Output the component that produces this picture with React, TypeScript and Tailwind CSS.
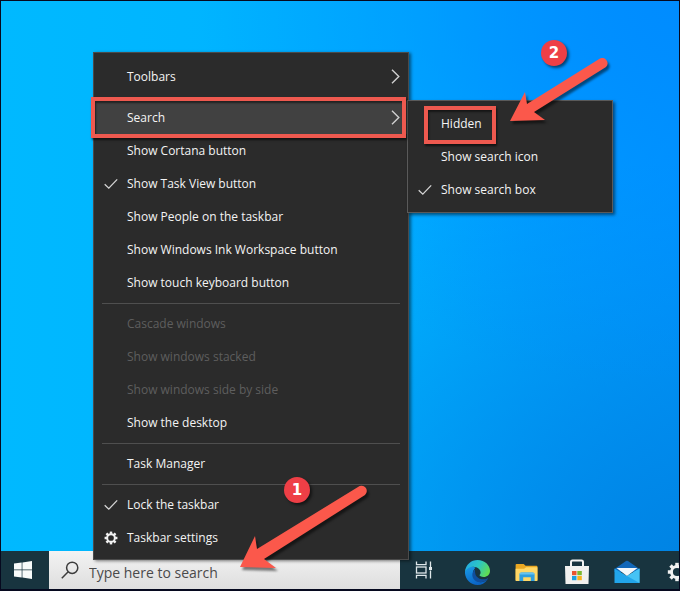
import React from 'react';

type MenuEntry = {
  label: string;
  icon?: 'check' | 'gear';
  arrow?: boolean;
  disabled?: boolean;
};

const menuGroups: MenuEntry[][] = [
  [{ label: 'Toolbars', arrow: true }],
  [
    { label: 'Search', arrow: true },
    { label: 'Show Cortana button' },
    { label: 'Show Task View button', icon: 'check' },
    { label: 'Show People on the taskbar' },
    { label: 'Show Windows Ink Workspace button' },
    { label: 'Show touch keyboard button' },
  ],
  [
    { label: 'Cascade windows', disabled: true },
    { label: 'Show windows stacked', disabled: true },
    { label: 'Show windows side by side', disabled: true },
    { label: 'Show the desktop' },
  ],
  [{ label: 'Task Manager' }],
  [
    { label: 'Lock the taskbar', icon: 'check' },
    { label: 'Taskbar settings', icon: 'gear' },
  ],
];

const searchOptions: MenuEntry[] = [
  { label: 'Hidden' },
  { label: 'Show search icon' },
  { label: 'Show search box', icon: 'check' },
];

const CheckIcon = () => (
  <svg viewBox="0 0 14 12" className="h-3 w-3.5" fill="none" stroke="#d4d4d4" strokeWidth="1.3">
    <path d="M0.7 6.2 L4.8 10.2 L13.2 1.4" />
  </svg>
);

const GearIcon = ({ className }: { className: string }) => (
  <svg viewBox="0 0 24 24" className={className} fill="none" stroke="#f2f2f2">
    <circle cx="12" cy="12" r="6.6" strokeWidth="3.4" />
    {[0, 45, 90, 135, 180, 225, 270, 315].map(angle => (
      <path key={angle} d="M12 5 V1" strokeWidth="4.2" transform={`rotate(${angle} 12 12)`} />
    ))}
  </svg>
);

const ChevronIcon = () => (
  <svg viewBox="0 0 9 15" className="h-[15px] w-[9px]" fill="none" stroke="#d0d0d0" strokeWidth="1.4">
    <path d="M1 0.8 L7.8 7.5 L1 14.2" />
  </svg>
);

const MenuRow = ({ entry, active }: { entry: MenuEntry; active?: boolean }) => (
  <button
    type="button"
    role="menuitem"
    disabled={entry.disabled}
    className={`flex h-[33px] w-full items-center pr-2 text-left text-[12px] text-[#f4f4f4] disabled:text-[#5e5e5e] ${active ? 'bg-[#414141]' : ''}`}
  >
    <span className="flex w-[33px] shrink-0 justify-center">
      {entry.icon === 'check' && <CheckIcon />}
      {entry.icon === 'gear' && <GearIcon className="h-3.5 w-3.5" />}
    </span>
    <span className="flex-1 whitespace-nowrap">{entry.label}</span>
    {entry.arrow && <ChevronIcon />}
  </button>
);

const Badge = ({ children, className }: { children: React.ReactNode; className: string }) => (
  <span
    className={`absolute flex h-[26px] w-[26px] items-center justify-center rounded-full bg-[#ee3f46] font-['DejaVu_Sans'] text-[15px] font-bold text-white shadow-[2px_2px_3px_rgba(0,0,0,0.55)] ${className}`}
  >
    {children}
  </span>
);

const Highlight = ({ className }: { className: string }) => (
  <span className={`pointer-events-none absolute border-4 border-[#ee594f] shadow-[1px_2px_2px_rgba(0,0,0,0.6),inset_1px_2px_2px_rgba(0,0,0,0.5)] ${className}`} />
);

const SearchSubmenu = () => (
  <div role="menu" className="absolute -top-px left-[313px] w-[206px] border border-[#5a5a5a] bg-[#2b2b2b] py-1.5 shadow-[2px_2px_3px_rgba(0,0,0,0.5)]">
    {searchOptions.map(option => (
      <MenuRow key={option.label} entry={option} />
    ))}
    <Highlight className="left-4 top-[5px] h-[38px] w-[72px]" />
    <Badge className="-top-[61px] left-[133px]">2</Badge>
    <svg viewBox="0 0 106 76" className="pointer-events-none absolute -top-[47px] left-[99px] h-[76px] w-[106px] drop-shadow-[2px_3px_1px_rgba(0,0,0,0.5)]">
      <path fill="#fb584b" d="M3 67 L18 38 L20 50 L93 4.5 A5.3 5.3 0 0 1 99 13 L27 58 L38 66 Z" />
    </svg>
  </div>
);

const TaskbarMenu = () => (
  <div role="menu" className="absolute -bottom-[9px] left-[92px] w-[316px] border border-[#4b4b4b] bg-[#2b2b2b] pt-[7px] pb-[5px] shadow-[2px_1px_3px_rgba(0,0,0,0.5)]">
    {menuGroups.map((group, index) => (
      <div key={group[0].label}>
        {index > 0 && <hr className="mx-2 mt-1 mb-[3px] border-t border-[#4f4f4f]" />}
        {group.map(entry =>
          entry.label === 'Search' ? (
            <div key={entry.label} className="relative z-10">
              <MenuRow entry={entry} active />
              <SearchSubmenu />
              <Highlight className="-left-[3px] right-[2px] -top-1 -bottom-1" />
            </div>
          ) : (
            <MenuRow key={entry.label} entry={entry} />
          ),
        )}
      </div>
    ))}
    <Badge className="bottom-[56px] left-[190px]">1</Badge>
    <svg viewBox="0 0 136 90" className="pointer-events-none absolute -bottom-[15px] left-[143px] h-[90px] w-[136px] drop-shadow-[2px_3px_1px_rgba(0,0,0,0.5)]">
      <path fill="#fb584b" d="M3 83 L18 52 L20 65 L121 3 A5.3 5.3 0 0 1 128 11 L27 75 L39 84 Z" />
    </svg>
  </div>
);

const WindowsLogo = () => (
  <svg viewBox="0 0 18 18" className="h-[18px] w-[18px]" fill="#f7fafa">
    <path d="M0 2.6 L7.7 1.5 V8.6 H0 Z M8.4 1.4 L18 0 V8.6 H8.4 Z M0 9.3 H7.7 V16.5 L0 15.4 Z M8.4 9.3 H18 V18 L8.4 16.6 Z" />
  </svg>
);

const TaskViewIcon = () => (
  <svg viewBox="0 0 18 18" className="h-[18px] w-[18px]" fill="none" stroke="#dfe7ea" strokeWidth="1.3">
    <path d="M1.5 0.5 V3.6 H11 V0.5 M1.5 17.5 V14.4 H11 V17.5" />
    <rect x="1.5" y="6" width="9.5" height="6" />
    <path d="M15.5 0.5 V6 M15.5 9.5 V17.5" />
    <rect x="14" y="6" width="3" height="3" fill="#dfe7ea" stroke="none" />
  </svg>
);

const EdgeIcon = () => (
  <svg viewBox="0 0 24 24" className="h-[25px] w-[25px]">
    <defs>
      <linearGradient id="edgeTop" x1="0" y1="0.2" x2="1" y2="0.6">
        <stop offset="0" stopColor="#22a9e8" />
        <stop offset="0.5" stopColor="#2cc6c3" />
        <stop offset="1" stopColor="#62dd4f" />
      </linearGradient>
      <linearGradient id="edgeLeft" x1="0" y1="0" x2="0.5" y2="1">
        <stop offset="0" stopColor="#1a9ce8" />
        <stop offset="1" stopColor="#0a63c4" />
      </linearGradient>
    </defs>
    <path fill="url(#edgeLeft)" d="M0 11 C1 6 6 5 10 7.5 C7 10 6.7 15.5 10 19 C13 22 17 22 21.5 19 C19 22.5 16 24 12 24 C5 24 -0.5 18 0 11 Z" />
    <path fill="#0f4f9e" d="M9.6 9 C7 11 6 15 8.5 18.5 C11 22 17 22.7 22 18.3 C22.3 17.8 22 17.4 21.5 17.7 C17 19.7 11.5 18 10 13.6 C9.5 12 9.5 10.4 9.6 9 Z" />
    <path fill="url(#edgeTop)" d="M0 11 C0.8 4.5 6 0 12 0 C19 0 24 5 24 10.3 C24 14.2 21 16.3 18 16.3 C15.5 16.3 13.7 15.4 14 14.5 C15.5 13 15.3 10.5 13.5 8.7 C10 5.2 3 5.6 0 11 Z" />
  </svg>
);

const ExplorerIcon = () => (
  <svg viewBox="0 0 24 20" className="h-[19px] w-6">
    <path fill="#e9a823" d="M1 1 H8.5 L10.5 3 H22 Q23 3 23 4 V18 H0 V2 Q0 1 1 1 Z" />
    <path fill="#ffd765" d="M0 6 H9 L11 4.5 H23 V19 H0 Z" />
    <path fill="#2f9ede" d="M4 19 V12 Q4 10 6 10 H18 Q20 10 20 12 V19 H16 V15 H8 V19 Z" />
    <path fill="#67c3ef" d="M4 12 Q4 10 6 10 H18 Q20 10 20 12 Z" />
  </svg>
);

const StoreIcon = () => (
  <svg viewBox="0 0 26 26" className="h-[26px] w-[26px]">
    <path fill="none" stroke="#f3f3f3" strokeWidth="2" d="M7 8 V3 Q7 1.5 8.5 1.5 H17.5 Q19 1.5 19 3 V8" />
    <path fill="#f1f1ef" d="M1 7 H25 L24.5 25 H1.5 Z" />
    <path fill="#e9532f" d="M8 12 H12.5 V16.2 H8 Z" />
    <path fill="#7cb82f" d="M13.3 12 H17.8 V16.2 H13.3 Z" />
    <path fill="#1c9fe0" d="M8 17 H12.5 V21.2 H8 Z" />
    <path fill="#f8b31c" d="M13.3 17 H17.8 V21.2 H13.3 Z" />
  </svg>
);

const MailIcon = () => (
  <svg viewBox="0 0 26 24" className="h-6 w-[26px]">
    <path fill="#1267b8" d="M0.5 9 L12 1 Q13 0.4 14 1 L25.5 9 V12 H0.5 Z" />
    <path fill="#22a5ea" d="M0.5 8.5 L13 16 L25.5 8.5 V23 H0.5 Z" />
    <path fill="#f4f8fb" d="M2.5 8 H23.5 L13 16 Z" />
    <path fill="#46c3f5" d="M25.5 8.5 V23 L13 16 Z" />
  </svg>
);

const apps = [
  { name: 'Microsoft Edge', icon: <EdgeIcon /> },
  { name: 'File Explorer', icon: <ExplorerIcon /> },
  { name: 'Microsoft Store', icon: <StoreIcon /> },
  { name: 'Mail', icon: <MailIcon /> },
  { name: 'Settings', icon: <GearIcon className="h-5 w-5" /> },
];

const Taskbar = () => (
  <div className="flex h-[38px] overflow-hidden bg-[#18343f]">
    <button type="button" aria-label="Start" className="flex w-12 shrink-0 items-center justify-center pr-1">
      <WindowsLogo />
    </button>
    <label className="flex w-[351px] shrink-0 items-center gap-2.5 bg-linear-to-b from-[#f3f3f3] to-[#dedede] pl-3">
      <svg viewBox="0 0 18 18" className="h-[18px] w-[18px] shrink-0" fill="none" stroke="#3c3c3c" strokeWidth="1.5">
        <circle cx="11.2" cy="6.8" r="5.6" />
        <path d="M7.2 10.8 L0.8 17.3" />
      </svg>
      <input
        type="text"
        aria-label="Search"
        placeholder="Type here to search"
        className="w-full bg-transparent pt-1 text-[14px] text-[#4a4a4a] outline-none placeholder:text-[#4a4a4a]"
      />
    </label>
    <button type="button" aria-label="Task View" className="flex w-[52px] shrink-0 items-center justify-center pr-1">
      <TaskViewIcon />
    </button>
    {apps.map(app => (
      <button key={app.name} type="button" aria-label={app.name} className="flex w-[50px] shrink-0 items-center justify-center pt-1">
        {app.icon}
      </button>
    ))}
  </div>
);

export default function App() {
  return (
    <div className="flex h-screen flex-col overflow-hidden border border-b-2 border-[#06091f] bg-[#00a8ff] font-['Open_Sans','Noto_Sans',sans-serif]">
      <main className="relative z-10 flex-1 bg-[radial-gradient(ellipse_at_100%_0%,#008cff_0%,rgba(0,140,255,0)_50%),radial-gradient(ellipse_at_100%_100%,#0084e4_0%,rgba(0,132,228,0)_50%),linear-gradient(90deg,#00b9ff_0%,#00b0ff_60%,#0098ff_100%)]">
        <TaskbarMenu />
      </main>
      <Taskbar />
    </div>
  );
}
